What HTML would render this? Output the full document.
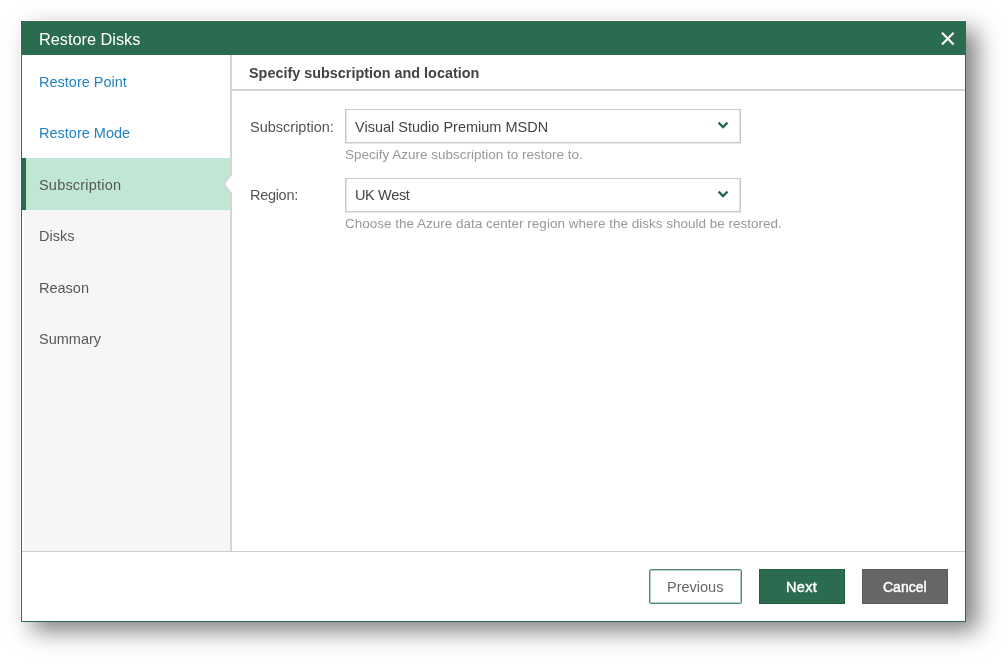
<!DOCTYPE html>
<html>
<head>
<meta charset="utf-8">
<style>
html,body{margin:0;padding:0;background:#fff;width:1008px;height:664px;overflow:hidden;}
body{position:relative;font-family:"Liberation Sans",sans-serif;}
.abs{position:absolute;white-space:nowrap;line-height:1;will-change:transform;}
#dlg{position:absolute;left:21px;top:21px;width:943px;height:599px;border:1px solid #2b6c50;background:#fff;
  box-shadow:11px 9px 22px rgba(0,0,0,0.5);}
#hdr{position:absolute;left:-1px;top:-1px;width:945px;height:34px;background:#2b6c50;}
#nav{position:absolute;left:0;top:33px;width:208px;height:496px;background:#f6f6f6;border-right:2px solid #d4d4d4;}
.done{position:absolute;left:0;width:208px;background:#fff;}
#sel{position:absolute;left:0;top:103px;width:208px;height:51.5px;background:#c0e6d4;}
#selbar{position:absolute;left:0;top:0;width:4px;height:100%;background:#2b6c50;}
#cline{position:absolute;left:210px;top:67px;width:733px;height:2px;background:#d6d6d6;}
#fline{position:absolute;left:0;top:529px;width:943px;height:1px;background:#cfcfcf;}
.sel{position:absolute;left:323px;width:394px;height:32px;border:1px solid #c9c9c9;background:#fff;box-shadow:inset 1px 0 0 #e2e2e2,inset -1px 0 0 #e2e2e2,0 1px 0 #e6e6e6;}
.btn{position:absolute;top:547px;height:35px;box-sizing:border-box;}
</style>
</head>
<body>
<div id="dlg">
  <div id="hdr"></div>
  <div class="abs" style="left:17px;top:9px;font-size:16.3px;color:#fff;">Restore Disks</div>
  <svg style="position:absolute;left:919px;top:10px" width="14" height="14" viewBox="0 0 14 14"><path d="M1 0.8L12.6 12.4M12.6 0.8L1 12.4" stroke="#fff" stroke-width="2.1"/></svg>

  <div id="nav">
    <div class="done" style="top:0;height:103px;"></div>
    <div id="sel"><div id="selbar"></div></div>
    <div style="position:absolute;left:0;top:155px;width:1.5px;height:341px;background:#fff;"></div>
  </div>
  <svg style="position:absolute;left:200px;top:153px" width="12" height="18" viewBox="0 0 12 18"><polygon points="8.5,1 1.5,9 8.5,17 12,17 12,1" fill="#fff"/><polyline points="9,0 2.2,9 9,18" fill="none" stroke="#d6d6d6" stroke-width="1.4"/></svg>

  <div class="abs" style="left:17px;top:53px;font-size:14.5px;color:#2583c2;">Restore Point</div>
  <div class="abs" style="left:17px;top:104px;font-size:14.5px;color:#2583c2;">Restore Mode</div>
  <div class="abs" style="left:17px;top:156px;font-size:14.5px;color:#585858;letter-spacing:0.2px;">Subscription</div>
  <div class="abs" style="left:17px;top:207px;font-size:14.5px;color:#585858;">Disks</div>
  <div class="abs" style="left:17px;top:259px;font-size:14.5px;color:#585858;">Reason</div>
  <div class="abs" style="left:17px;top:310px;font-size:14.5px;color:#585858;">Summary</div>

  <div class="abs" style="left:227px;top:44px;font-size:14.4px;font-weight:bold;color:#444;">Specify subscription and location</div>
  <div id="cline"></div>

  <div class="abs" style="left:228px;top:98px;font-size:14.5px;color:#555;">Subscription:</div>
  <div class="sel" style="top:87px;"></div>
  <div class="abs" style="left:333px;top:98px;font-size:14.5px;color:#444;">Visual Studio Premium MSDN</div>
  <svg style="position:absolute;left:695px;top:99px" width="12" height="10" viewBox="0 0 12 10"><path d="M1.6 1.6L6.05 6.15L10.5 1.6" fill="none" stroke="#1e6a4a" stroke-width="2.3"/></svg>
  <div class="abs" style="left:323px;top:126px;font-size:13.5px;color:#999;">Specify Azure subscription to restore to.</div>

  <div class="abs" style="left:228px;top:166px;font-size:14.5px;color:#555;letter-spacing:-0.3px;">Region:</div>
  <div class="sel" style="top:156px;"></div>
  <div class="abs" style="left:333px;top:166px;font-size:14.5px;color:#444;letter-spacing:-0.35px;">UK West</div>
  <svg style="position:absolute;left:695px;top:168px" width="12" height="10" viewBox="0 0 12 10"><path d="M1.6 1.6L6.05 6.15L10.5 1.6" fill="none" stroke="#1e6a4a" stroke-width="2.3"/></svg>
  <div class="abs" style="left:323px;top:195px;font-size:13.5px;color:#999;">Choose the Azure data center region where the disks should be restored.</div>

  <div id="fline"></div>
  <div class="btn" style="left:627px;width:93px;border:1px solid #4f8a6c;border-radius:2px;background:#fff;box-shadow:inset 0 0 0 1px #b3cfc1;"></div>
  <div class="abs" style="left:645px;top:558px;font-size:14.5px;color:#666;">Previous</div>
  <div class="btn" style="left:737px;width:86px;background:#2b6c50;border:1px solid #235f45;"></div>
  <div class="abs" style="left:764px;top:558px;font-size:14.5px;color:#fff;-webkit-text-stroke:0.45px #fff;letter-spacing:0.3px;">Next</div>
  <div class="btn" style="left:840px;width:86px;background:#666;border:1px solid #5a5a5a;"></div>
  <div class="abs" style="left:861px;top:558px;font-size:14px;color:#fff;-webkit-text-stroke:0.45px #fff;">Cancel</div>
</div>
<div style="position:absolute;left:20px;top:20px;width:946px;height:1px;background:#fff"></div><div style="position:absolute;left:20px;top:20px;width:1px;height:602px;background:#fff"></div>
</body>
</html>
